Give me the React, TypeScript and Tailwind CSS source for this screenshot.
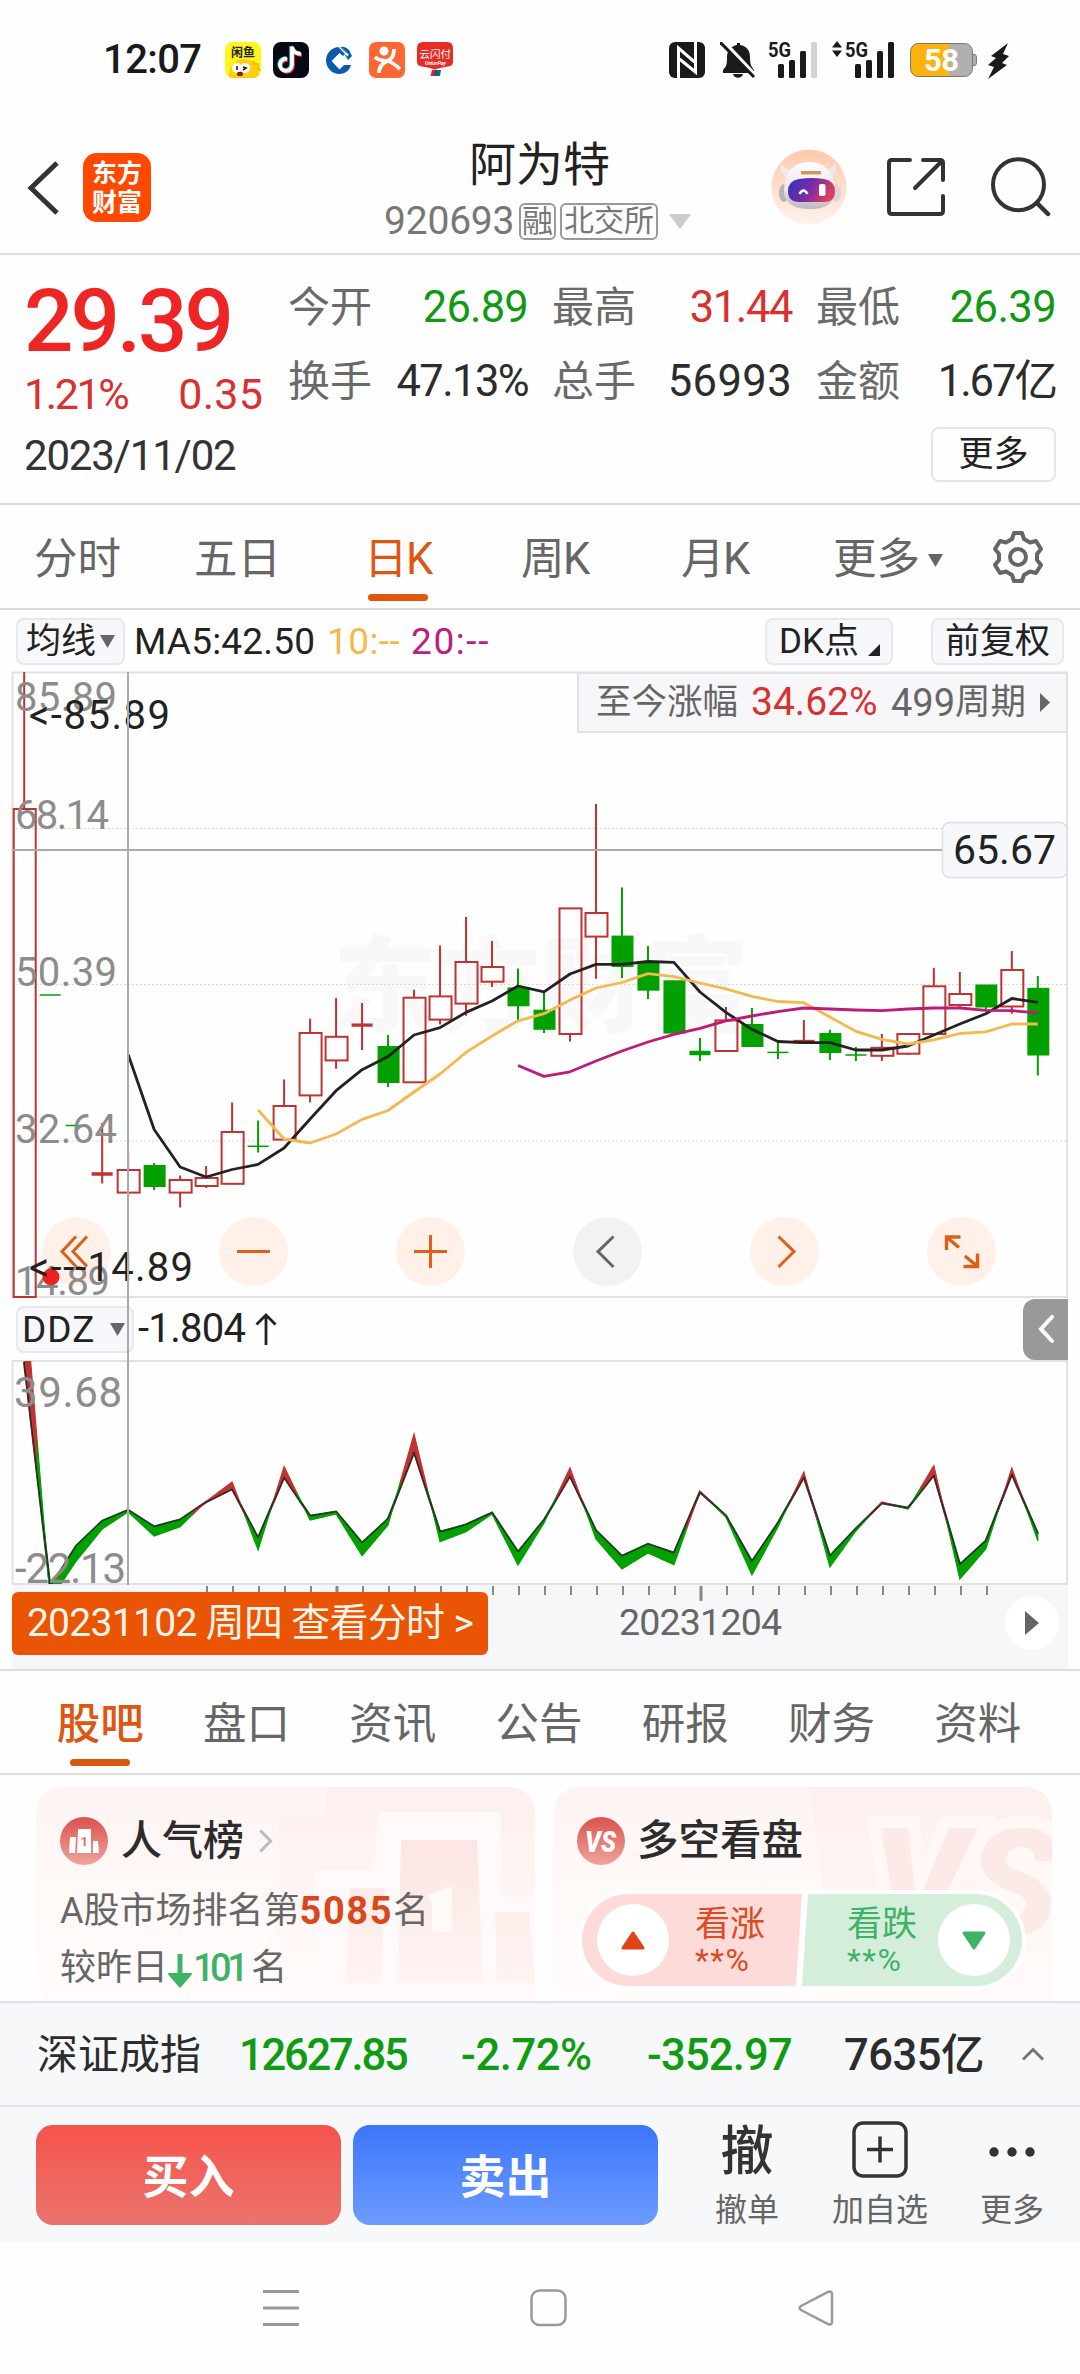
import { ChevronRight } from "lucide-react";
import type { ReactNode } from "react";

type Candle = {
  up: boolean;
  high: number;
  top: number;
  bottom: number;
  low: number;
};

const FIRST_X = 24.2;
const STEP = 25.99;
const xAt = (i: number) => FIRST_X + STEP * i;

// [rising, high, body top, body bottom, low] in chart coordinates
const rawCandles: [number, number, number, number, number][] = [
  [1, 672, 809, 1297, 1297],
  [0, 995, 995, 995, 995],
  [0, 1125.5, 1125.5, 1125.5, 1125.5],
  [1, 1123, 1173, 1175, 1183.5],
  [1, 1152, 1170, 1192.6, 1196],
  [0, 1163, 1166, 1186, 1190],
  [1, 1175.5, 1180, 1192.6, 1207.5],
  [1, 1166, 1178, 1186, 1188],
  [1, 1102.5, 1132, 1183.8, 1184.6],
  [0, 1120.6, 1146.3, 1146.3, 1152.6],
  [1, 1079.4, 1106, 1139.6, 1139.6],
  [1, 1018.7, 1033, 1095.4, 1102.5],
  [1, 998, 1036.8, 1060.4, 1068.8],
  [1, 1003, 1024.2, 1026, 1050],
  [0, 1035, 1047, 1082, 1087],
  [1, 989.7, 997.7, 1082.3, 1082.3],
  [1, 945.5, 996.4, 1019.6, 1024.6],
  [1, 917, 962, 1003.6, 1015.8],
  [1, 941, 967, 981.7, 987],
  [0, 968.6, 988.4, 1005.3, 1021],
  [0, 992.6, 1010.7, 1028.8, 1033],
  [1, 908.4, 908.4, 1034, 1041.5],
  [1, 804, 913, 936.6, 978.7],
  [0, 887.4, 936.6, 966, 978],
  [0, 946, 962, 989.7, 999],
  [0, 981.3, 981.3, 1032.6, 1032.6],
  [0, 1038, 1051.5, 1054.5, 1061],
  [1, 1007, 1020.4, 1051, 1051],
  [0, 1008, 1025, 1046, 1046],
  [0, 1042, 1052.4, 1052.4, 1059],
  [1, 1020, 1040.6, 1042.7, 1042.7],
  [0, 1029.7, 1034, 1052, 1060],
  [0, 1047, 1055, 1055, 1061],
  [1, 1034, 1047.8, 1055.8, 1061],
  [1, 1034, 1034, 1053.7, 1055],
  [1, 967.8, 986.3, 1034, 1034],
  [1, 972, 994, 1005, 1008],
  [0, 985.5, 985.5, 1006.5, 1009.5],
  [1, 951, 970, 1006.5, 1013.7],
  [0, 976, 988.8, 1054.5, 1075.6],
];

const candles: Candle[] = rawCandles.map(([up, high, top, bottom, low]) => ({
  up: up === 1,
  high,
  top,
  bottom,
  low,
}));

const averages = [
  {
    color: "#222222",
    start: 4,
    values: [
      1054.5, 1129.5, 1167, 1177, 1169.5, 1164.4, 1148, 1119, 1090.7, 1069.7,
      1056.6, 1035, 1027.6, 1012.4, 1001, 986, 991.8, 974, 964.4, 964.4, 961.5,
      962.3, 992, 1012.4, 1029.3, 1041.5, 1042.7, 1042.7, 1050, 1050, 1046,
      1035, 1024, 1013.7, 998.5, 1002.3,
    ],
  },
  {
    color: "#F3B94F",
    start: 9,
    values: [
      1110, 1139, 1143, 1134, 1119.4, 1110.5, 1092, 1074, 1052.4, 1036, 1020.8,
      1013.7, 1000, 988, 982.5, 973.7, 976.6, 983, 988.8, 996.4, 1001.5, 1002.7,
      1017, 1031.4, 1039.4, 1044, 1039.8, 1033.5, 1031.8, 1024, 1024,
    ],
  },
  {
    color: "#BF1A7A",
    start: 19,
    values: [
      1065.5, 1076.4, 1071.8, 1061, 1051, 1042, 1034.3, 1028.4, 1020.8, 1016,
      1011.6, 1008, 1009, 1010, 1010.7, 1009, 1008, 1008, 1010.3, 1010.7,
      1012.8,
    ],
  },
];

// [line, band edge] for the DDZ indicator
const ddz: [number, number][] = [
  [1362, 1283], [1587, 1600], [1546, 1561], [1521, 1529], [1510, 1512],
  [1526.7, 1536], [1519.7, 1526.7], [1502, 1501.5], [1489, 1482], [1538, 1550],
  [1477, 1466.7], [1516, 1520], [1511.7, 1514], [1543, 1555.7], [1519, 1525],
  [1452, 1434], [1532, 1541.7], [1524.7, 1531.7], [1512.7, 1514], [1552, 1565],
  [1520, 1523], [1476, 1467.7], [1530.7, 1539], [1556, 1569], [1544, 1553],
  [1553, 1564.7], [1492, 1491.5], [1515.7, 1517], [1561.7, 1575], [1523, 1527],
  [1477, 1472], [1556, 1567], [1528.7, 1531], [1503, 1502], [1508, 1509],
  [1475, 1465.7], [1564.7, 1579], [1541, 1549], [1474, 1468], [1533.7, 1540.7],
];

const RED = "#BF3330";
const GREEN = "#02A000";

function StatusBar() {
  return (
    <div className="flex h-[120px] items-center pl-[103px] pr-[70px] text-[#1a1a1a]">
      <span className="w-[122px] text-[40px] font-medium leading-none tracking-[-0.6px]">
        12:07
      </span>
      <div className="flex gap-3">
        <svg width="36" height="36" viewBox="0 0 36 36">
          <defs>
            <clipPath id="fishClip">
              <rect width="36" height="36" rx="8" />
            </clipPath>
          </defs>
          <g clipPath="url(#fishClip)">
            <rect width="36" height="36" fill="#FDF61A" />
            <circle cx="19" cy="32" r="15" fill="#FFD012" />
            <circle cx="12" cy="26" r="5" fill="#fff" />
            <circle cx="20" cy="26" r="5" fill="#fff" />
            <path d="M12 24v4M18 25l3 1-3 2" stroke="#222" strokeWidth="1.6" fill="none" />
            <ellipse cx="15" cy="32" rx="3" ry="2.2" fill="#8b1a10" />
            <path d="M28 19l2 3 3 0 0 4 2 3" stroke="#F5A800" strokeWidth="1.5" fill="none" />
            <text x="6" y="15" fontSize="12" fontWeight="700" fill="#222">
              闲鱼
            </text>
          </g>
        </svg>
        <svg width="36" height="36" viewBox="0 0 36 36">
          <rect width="36" height="36" rx="8" fill="#080814" />
          <g fill="none" strokeWidth="3.6">
            <path d="M14 17a6 6 0 1 0 5 6V5c1 4 4 7 9 7" stroke="#25F4EE" transform="translate(-.8 -.8)" />
            <path d="M14 17a6 6 0 1 0 5 6V5c1 4 4 7 9 7" stroke="#FE2C55" transform="translate(1 1)" />
            <path d="M14 17a6 6 0 1 0 5 6V5c1 4 4 7 9 7" stroke="#fff" />
          </g>
        </svg>
        <svg width="36" height="36" viewBox="0 0 36 36">
          <path d="M19 6A12.500 12.500 0 1 0 30 24L22 24" stroke="none" fill="none" />
          <path
            d="M20 5C11 4 5 11 5 18.500S11 32 18.500 32c6 0 10-3.500 11.500-9h-7l-4.500 4.500-8-8.500 8-8 3.500 3 3-3z"
            fill="#0A5BAF"
          />
          <path d="M20 5l8 8h-4l3 5 4-4-3-6q-4-4-8-3z" fill="#0A5BAF" />
          <path d="M18 5l9 9" stroke="#fff" strokeWidth="1.200" />
        </svg>
        <svg width="36" height="36" viewBox="0 0 36 36">
          <rect width="36" height="36" rx="7" fill="#FF6633" />
          <circle cx="15" cy="9" r="4.6" fill="#fff" />
          <path
            d="M6 15c5 5 9 3 12 4 4-1 7-5 7-12M18 19C12 22 10 26 10 31M18 19c6 1 8 4 13 8"
            stroke="#fff"
            strokeWidth="3.8"
            fill="none"
          />
        </svg>
        <svg width="36" height="36" viewBox="0 0 36 36">
          <path d="M6 0h24q6 0 6 6v14q0 4-5 4.500-7 1-13 3-6-2-13-3Q0 24 0 20V6Q0 0 6 0z" fill="#E92B25" />
          <text x="2.500" y="15.500" fontSize="10.500" fill="#fff">
            云闪付
          </text>
          <text x="8" y="22.500" fontSize="5" fontStyle="italic" fontWeight="700" fill="#fff">
            UnionPay
          </text>
          <path d="M15 28h4l-1.500 6h-4z" fill="#E0262E" />
          <path d="M18 28h3l-1 6h-3z" fill="#1B4F8F" />
          <path d="M20 28h4l-1 6h-4z" fill="#0B7478" />
        </svg>
      </div>
      <div className="ml-auto flex items-center">
        <svg width="36" height="36" viewBox="0 0 36 36">
          <rect width="36" height="36" rx="6" fill="#1a1a1a" />
          <path d="M9.500 36V6l16 14M26.500 0v30l-16-13" stroke="#fff" strokeWidth="3" fill="none" />
        </svg>
        <svg className="ml-[15px]" width="36" height="36" viewBox="0 0 36 36">
          <path
            d="M17 3V1h3v2c7 1 10 6 10 12 0 7 1 9 4 13v3H3v-3c4-4 4-7 4-13 0-6 4-11 10-12zM13 32h10c-1 5-9 5-10 0z"
            fill="#1a1a1a"
          />
          <path d="M3-1l32 34" stroke="#fff" strokeWidth="4" />
          <path d="M0 0l34 35" stroke="#1a1a1a" strokeWidth="3" />
        </svg>
        <svg className="ml-[12px] overflow-visible" width="49" height="38" viewBox="0 0 49 38">
          <text x="0" y="15.500" fontSize="20" fontWeight="700" fill="#1a1a1a" textLength="23" lengthAdjust="spacingAndGlyphs">
            5G
          </text>
          <rect x="10" y="23" width="6" height="14" rx="1.500" fill="#1a1a1a" />
          <rect x="21" y="19" width="6" height="18" rx="1.500" fill="#1a1a1a" />
          <rect x="32" y="10" width="6" height="27" rx="1.500" fill="#1a1a1a" />
          <rect x="43" y="1" width="6" height="36" rx="1.500" fill="#d2d2d2" />
        </svg>
        <svg className="ml-[15px] overflow-visible" width="62" height="38" viewBox="0 0 62 38">
          <path d="M0 6.500L5 0l5 6.500zM0 9.500h10L5 16z" fill="#1a1a1a" />
          <text x="13" y="15.500" fontSize="20" fontWeight="700" fill="#1a1a1a" textLength="23" lengthAdjust="spacingAndGlyphs">
            5G
          </text>
          <rect x="23" y="23" width="6" height="14" rx="1.500" fill="#1a1a1a" />
          <rect x="34" y="19" width="6" height="18" rx="1.500" fill="#1a1a1a" />
          <rect x="45" y="10" width="6" height="27" rx="1.500" fill="#1a1a1a" />
          <rect x="56" y="1" width="6" height="36" rx="1.500" fill="#1a1a1a" />
        </svg>
        <svg className="ml-[16px]" width="67" height="36" viewBox="0 0 67 36">
          <rect x=".5" y="1.500" width="62" height="33" rx="8" fill="#B0B0B0" />
          <path d="M39 1.500H8.500a8 8 0 0 0-8 8v17a8 8 0 0 0 8 8H39z" fill="#FCB30B" />
          <rect x=".5" y="1.500" width="62" height="33" rx="8" fill="none" stroke="#777" />
          <path d="M62.500 12q4 0 4 3v6q0 3-4 3z" fill="#B0B0B0" stroke="#777" />
          <text x="14" y="29" fontSize="31" fontWeight="700" fill="#fff" textLength="35">
            58
          </text>
        </svg>
        <svg className="ml-[11px]" width="22" height="37" viewBox="0 0 22 37">
          <path d="M20 1L3 14l5 2-8 7 6 2L0 37l19-14-5-2 7-7-6-2z" fill="#1a1a1a" />
        </svg>
      </div>
    </div>
  );
}

function Header() {
  return (
    <header className="flex h-[135px] items-start border-b-2 border-[#dcdcdc] pl-[26px] pt-[22px]">
      <svg className="mt-[18px]" width="36" height="56" viewBox="0 0 36 56">
        <path d="M31 3L5 28l26 25" stroke="#333" strokeWidth="5" fill="none" />
      </svg>
      <div className="ml-[21px] mt-[11px] flex h-[69px] w-[68px] flex-col items-center justify-center rounded-[14px] bg-[#FF4800] text-[25px] font-bold leading-[29px] text-white">
        <span>东方</span>
        <span>财富</span>
      </div>
      <div className="ml-[204px] flex w-[340px] flex-col items-center">
        <h1 className="ml-[29px] text-[47px] leading-[46px] text-[#222]">阿为特</h1>
        <div className="mt-[13px] flex h-[40px] items-center self-start pl-[29px] text-[#777]">
          <span className="w-[135px] text-[39px] leading-none tracking-[-0.2px]">920693</span>
          <span className="flex h-[37px] w-[37px] items-center justify-center rounded-md border-2 border-[#999] text-[31px] leading-none">
            融
          </span>
          <span className="ml-1 flex h-[37px] w-[98px] items-center justify-center rounded-md border-2 border-[#999] text-[30px] leading-none">
            北交所
          </span>
          <svg className="ml-[11px]" width="22" height="15" viewBox="0 0 22 15">
            <path d="M1 0h20q1 0 .5 1L12 14q-1 1-2 0L.5 1Q0 0 1 0z" fill="#ccc" />
          </svg>
        </div>
      </div>
      <svg className="ml-[76px] mt-[7px]" width="76" height="76" viewBox="0 0 76 76">
        <defs>
          <linearGradient id="botBg" x1="0" y1="0" x2="0" y2="1">
            <stop offset="0" stopColor="#FFC9AE" />
            <stop offset="1" stopColor="#FFF3EC" />
          </linearGradient>
          <linearGradient id="visor" x1="0" y1="0" x2="1" y2="0.300">
            <stop offset="0" stopColor="#2B35B5" />
            <stop offset="0.550" stopColor="#7A2AA8" />
            <stop offset="1" stopColor="#D8405F" />
          </linearGradient>
          <linearGradient id="shell" x1="0" y1="0" x2="0" y2="1">
            <stop offset="0" stopColor="#FFFFFF" />
            <stop offset="0.600" stopColor="#E9E5E8" />
            <stop offset="1" stopColor="#BDB8C0" />
          </linearGradient>
        </defs>
        <circle cx="38" cy="38" r="37.500" fill="url(#botBg)" />
        <path d="M11 14q-4 10 5 15l6-8q-8 0-11-7zM64 14q4 10-5 15l-6-8q8 0 11-7z" fill="#EFEAEA" />
        <ellipse cx="13" cy="44" rx="5" ry="9" fill="#B9B2B8" />
        <ellipse cx="65" cy="44" rx="5" ry="9" fill="#DCD6DA" />
        <path d="M38 13c17 0 25 12 26 28 0 14-10 19-25 19s-26-5-26-19c1-16 8-28 25-28z" fill="url(#shell)" />
        <path d="M28 30q12-2 25 0 11 2 11 12 0 11-11 11H28q-11 0-11-11 0-10 11-12z" fill="url(#visor)" />
        <path d="M28.500 45q4-7 8 0" stroke="#fff" strokeWidth="2.500" fill="none" />
        <rect x="48" y="35" width="6.500" height="12" rx="2" fill="#fff" />
        <rect x="30" y="22" width="20" height="3.500" rx="1" fill="#D9935A" />
      </svg>
      <svg className="ml-[39px] mt-[14px]" width="62" height="62" viewBox="0 0 62 62">
        <path
          d="M24 4H6q-3 0-3 3v48q0 3 3 3h48q3 0 3-3V40M37 4h17q3 0 3 3v17M56 5L29 32"
          stroke="#333"
          strokeWidth="4"
          strokeLinecap="round"
          fill="none"
        />
      </svg>
      <svg className="ml-[41px] mt-[13px]" width="62" height="64" viewBox="0 0 62 64">
        <circle cx="29.500" cy="29.700" r="25.500" stroke="#333" strokeWidth="4" fill="none" />
        <path d="M48 48l11 11" stroke="#333" strokeWidth="4.500" strokeLinecap="round" />
      </svg>
    </header>
  );
}

const quotes = [
  [
    { label: "今开", value: "26.89", cls: "tracking-[-0.8px] text-[#119A11]" },
    { label: "最高", value: "31.44", cls: "tracking-[-1.4px] text-[#D93030]" },
    { label: "最低", value: "26.39", cls: "tracking-[-0.6px] text-[#119A11]" },
  ],
  [
    { label: "换手", value: "47.13%", cls: "tracking-[-1.6px] text-[#2c2c2c]" },
    { label: "总手", value: "56993", cls: "tracking-[0.4px] text-[#2c2c2c]" },
    { label: "金额", value: "1.67亿", cls: "tracking-[-2px] text-[#2c2c2c]" },
  ],
];

function QuotePanel() {
  return (
    <section className="flex h-[250px] flex-col border-b-2 border-[#dcdcdc] pl-[24px] pr-[24px]">
      <div className="flex h-[164px]">
        <div className="w-[264px]">
          <div className="mt-[23px] h-[86px] text-[87px] font-medium leading-[86px] tracking-[-3px] text-[#EE2525]">
            29.39
          </div>
          <div className="mt-[5px] flex w-[239px] justify-between text-[43px] leading-[50px] text-[#D93030]">
            <span className="tracking-[-2.4px]">1.21%</span>
            <span className="tracking-[0.2px]">0.35</span>
          </div>
        </div>
        <div className="flex flex-1 flex-col pt-[16px]">
          {quotes.map((row, i) => (
            <div key={i} className="flex h-[75px] items-center gap-[24px]">
              {row.map((q) => (
                <div key={q.label} className="flex w-[240px] items-center justify-between">
                  <span className="text-[42px] leading-none text-[#6a6a6a]">{q.label}</span>
                  <span className={`text-[43.5px] leading-none ${q.cls}`}>{q.value}</span>
                </div>
              ))}
            </div>
          ))}
        </div>
      </div>
      <div className="flex items-center justify-between">
        <span className="mt-[10px] text-[42px] leading-none tracking-[-1.2px] text-[#333]">2023/11/02</span>
        <button className="mt-2 flex h-[55px] w-[125px] items-center justify-center rounded-lg border-2 border-[#e6e6e8] text-[35px] leading-none text-[#222]">
          更多
        </button>
      </div>
    </section>
  );
}

function Down({ className }: { className?: string }) {
  return (
    <svg className={className} width="15" height="13" viewBox="0 0 15 13">
      <path d="M0 0h15L7.500 13z" fill="#666" />
    </svg>
  );
}

function PeriodTabs() {
  return (
    <nav className="flex h-[105px] items-start border-b-2 border-[#dcdcdc] pl-[34px] pt-[30px] text-[43.5px] leading-[50px] text-[#666]">
      <span className="w-[160px]">分时</span>
      <span className="w-[170px]">五日</span>
      <span className="flex w-[157px] flex-col tracking-[-1.5px] text-[#DE5710]">
        日K
        <i className="ml-[4px] mt-[9px] h-[7px] w-[60px] rounded-full bg-[#E2560B]" />
      </span>
      <span className="w-[160px] tracking-[-1.5px]">周K</span>
      <span className="w-[152px] tracking-[-1.5px]">月K</span>
      <span className="flex w-[158px] items-center">
        更多
        <Down className="ml-[8px]" />
      </span>
      <svg className="mt-[-5px]" width="54" height="54" viewBox="0 0 54 54" fill="none" stroke="#666" strokeWidth="4">
        <path
          d="M23 3h8l2 6 6 3.500 6-1.500 5 8-4 5v6l4 5-5 8-6-1.500-6 3.500-2 6h-8l-2-6-6-3.500-6 1.500-5-8 4-5v-6l-4-5 5-8 6 1.500 6-3.500z"
          strokeLinejoin="round"
        />
        <circle cx="27" cy="27" r="8" />
      </svg>
    </nav>
  );
}

function Chip({ className, children }: { className: string; children: ReactNode }) {
  return (
    <span
      className={`flex h-[47px] shrink-0 items-center rounded-lg border-2 border-[#e6e8ec] bg-[#f7f8fb] text-[35px] leading-none text-[#222] ${className}`}
    >
      {children}
    </span>
  );
}

function AverageBar() {
  return (
    <div className="flex h-[62px] items-center pl-[16px] pr-[16px] text-[37px] leading-none">
      <Chip className="w-[109px] pl-[8px]">
        均线
        <Down className="ml-[4px]" />
      </Chip>
      <span className="ml-[9px] w-[193px] tracking-[0.2px] text-[#222]">MA5:42.50</span>
      <span className="w-[84px] tracking-[0.4px] text-[#F0BA4E]">10:--</span>
      <span className="tracking-[1.6px] text-[#BB2080]">20:--</span>
      <Chip className="ml-auto w-[128px] pl-[12px]">
        DK点
        <svg className="ml-[9px] mt-[18px]" width="12" height="12" viewBox="0 0 12 12">
          <path d="M12 0v12H0z" fill="#222" />
        </svg>
      </Chip>
      <Chip className="ml-[38px] w-[133px] justify-center">前复权</Chip>
    </div>
  );
}

function CandleShape({ c, i }: { c: Candle; i: number }) {
  const x = xAt(i);
  const color = c.up ? RED : GREEN;
  const flat = c.bottom - c.top < 4;
  return (
    <g stroke={color} strokeWidth="2">
      <path d={`M${x} ${c.high}V${c.top}M${x} ${c.bottom}V${c.low}`} />
      {flat ? (
        <rect
          x={x - 10.5}
          y={c.top - 0.75}
          width="21"
          height={c.bottom - c.top + 1.5}
          fill={color}
          stroke="none"
        />
      ) : (
        <rect
          x={x - (c.up ? 10.5 : 9.5)}
          y={c.top}
          width={c.up ? 22 : 20}
          height={c.bottom - c.top}
          fill={c.up ? "none" : color}
        />
      )}
    </g>
  );
}

function PriceChart() {
  const orange = "#DB611A";
  return (
    <div className="relative">
      <svg className="block overflow-visible" width="1080" height="626" viewBox="0 672 1080 626">
        <text x="333" y="1024" fontSize="104" fontWeight="900" fill="#F8F8F9" textLength="416">
          东方财富
        </text>
        <g stroke="#dadada" strokeWidth="1.200" strokeDasharray="2 2">
          <path d="M12 828.500H1067M12 984.500H1067M12 1141H1067" />
        </g>
        <rect x="12.500" y="672.500" width="1054.500" height="624.500" fill="none" stroke="#e2e2e2" strokeWidth="2" />
        {candles.map((c, i) => (
          <CandleShape key={i} c={c} i={i} />
        ))}
        {averages.map((line) => (
          <polyline
            key={line.color}
            points={line.values.map((y, i) => `${xAt(line.start + i)},${y}`).join(" ")}
            fill="none"
            stroke={line.color}
            strokeWidth="2.800"
            strokeLinejoin="round"
          />
        ))}
        <path d="M12 850H942" stroke="#aaa" strokeWidth="2" />
        {[76.4, 253.4, 430.4, 607.5, 784.5, 961.5].map((x, i) => (
          <circle key={x} cx={x} cy="1251.600" r="34.500" fill={i === 3 ? "#F2F2F2" : "#FFF1E9"} />
        ))}
        <g fill="none" stroke={orange} strokeWidth="3">
          <path d="M76 1236.500L62 1251.500L76 1266.500M87 1236.500L73 1251.500L87 1266.500" />
          <path d="M237 1251.500h33M414 1251.500h33M430.500 1235v33" />
          <path d="M613.500 1236.500L598 1251.600L613.500 1267" stroke="#666" />
          <path d="M778.500 1236.500L794 1251.600L778.500 1267" />
          <path d="M946.500 1250v-13h14M947 1237.500l12 10M963.500 1266.500h14v-13M977 1266l-12-10" strokeWidth="3.400" />
        </g>
        <g fontSize="40" fill="#8c8c8c">
          <text x="15" y="710.500" textLength="102">85.89</text>
          <text x="15" y="829" textLength="94">68.14</text>
          <text x="15" y="985.500" textLength="102">50.39</text>
          <text x="15" y="1142.500" textLength="102">32.64</text>
          <text x="15" y="1295" textLength="95">14.89</text>
        </g>
        <circle cx="51" cy="1277" r="8.500" fill="#EE2222" />
        <g fontSize="40" fill="#222">
          <text x="29" y="728.500" textLength="141">{"<-85.89"}</text>
          <text x="29" y="1281" textLength="164">{"<---14.89"}</text>
        </g>
        <rect x="942.500" y="822.500" width="124.500" height="55" rx="7" fill="#F7F8FB" stroke="#DCDFE6" strokeWidth="1.500" />
        <text x="953" y="864" fontSize="41" fill="#222" textLength="103">
          65.67
        </text>
      </svg>
      <div className="absolute right-[12px] top-0 flex h-[61px] w-[491px] items-center border-2 border-[#e2e2e6] bg-[#f7f7fa] pl-[17px] text-[35.5px] leading-none text-[#666]">
        至今涨幅
        <span className="ml-[13px] w-[140px] text-[39px] text-[#D93030]">34.62%</span>
        <span className="text-[38px]">499</span>周期
        <svg className="ml-[14px]" width="10" height="19" viewBox="0 0 10 19">
          <path d="M0 0l10 9.500L0 19z" fill="#666" />
        </svg>
      </div>
    </div>
  );
}

function DdzBar() {
  return (
    <div className="flex h-[62px] items-center pl-[16px] pr-[12px] leading-none">
      <Chip className="w-[118px] justify-between pl-[4px] pr-[7px]">
        <span className="text-[37px] tracking-[1px]">DDZ</span>
        <Down />
      </Chip>
      <span className="ml-[4px] text-[40px] tracking-[-0.7px] text-[#222]">-1.804</span>
      <svg className="ml-[10px]" width="22" height="32" viewBox="0 0 22 32">
        <path d="M11 32V2M1.500 11.500L11 2l9.500 9.500" stroke="#222" strokeWidth="2.800" fill="none" />
      </svg>
      <div className="ml-auto flex h-[61px] w-[45px] items-center justify-center rounded-l-[12px] bg-[#999]">
        <svg width="16" height="28" viewBox="0 0 16 28">
          <path d="M14 2L3 14l11 12" stroke="#fff" strokeWidth="4" strokeLinecap="round" fill="none" />
        </svg>
      </div>
    </div>
  );
}

function DdzChart() {
  const last = ddz.length - 1;
  const bands = ddz.map(([a, b], i) => {
    const top: string[] = [];
    const bottom: string[] = [];
    if (i > 0) {
      const x = (xAt(i - 1) + xAt(i)) / 2;
      top.push(`${x},${(ddz[i - 1][0] + a) / 2}`);
      bottom.unshift(`${x},${(ddz[i - 1][1] + b) / 2}`);
    }
    top.push(`${xAt(i)},${a}`);
    bottom.unshift(`${xAt(i)},${b}`);
    if (i < last) {
      const x = (xAt(i + 1) + xAt(i)) / 2;
      top.push(`${x},${(ddz[i + 1][0] + a) / 2}`);
      bottom.unshift(`${x},${(ddz[i + 1][1] + b) / 2}`);
    }
    return { points: [...top, ...bottom].join(" "), color: b < a ? RED : GREEN };
  });

  return (
    <svg className="block" width="1080" height="225" viewBox="0 1360 1080 225">
      <defs>
        <clipPath id="ddzClip">
          <rect x="12" y="1361" width="1056" height="223" />
        </clipPath>
      </defs>
      <rect x="12.500" y="1361" width="1054.500" height="223" fill="none" stroke="#e2e2e2" strokeWidth="2" />
      <g clipPath="url(#ddzClip)">
        <polyline
          points={ddz.map(([y], i) => `${xAt(i)},${y}`).join(" ")}
          fill="none"
          stroke="#222"
          strokeWidth="2.400"
        />
        {bands.map((band, i) => (
          <polygon key={i} points={band.points} fill={band.color} stroke={band.color} strokeWidth="1.200" />
        ))}
        <polyline
          points={ddz.map(([y], i) => `${xAt(i)},${y}`).join(" ")}
          fill="none"
          stroke="#222"
          strokeWidth="1"
        />
      </g>
      <g fontSize="42" fill="#8c8c8c">
        <text x="14" y="1406.500" textLength="108">39.68</text>
        <text x="15" y="1582.500" textLength="111">-22.13</text>
      </g>
    </svg>
  );
}

function TimeAxis() {
  const ticks = Array.from({ length: 31 }, (_, i) => 207 + i * 26);
  return (
    <div className="relative mx-[12px] flex h-[84px] items-center bg-[#f7f7fa] pr-[9px]">
      <svg className="absolute left-0 top-0" width="1056" height="18" viewBox="12 1585 1056 18">
        {ticks.map((x, i) => (
          <path
            key={x}
            d={`M${x} 1586v${i === 19 ? 15 : 9}`}
            stroke="#888"
            strokeWidth={i === 19 || i === 5 ? 3 : 2}
          />
        ))}
      </svg>
      <button className="relative mt-[-7px] flex h-[63px] w-[476px] items-center justify-center whitespace-pre rounded-[6px] bg-[#E95504] text-[39px] leading-none tracking-[-0.7px] text-[#FFF4EA]">
        20231102 周四 查看分时 &gt;
      </button>
      <span className="ml-[131px] mt-[-9px] text-[37.5px] leading-none tracking-[-0.8px] text-[#666]">
        20231204
      </span>
      <span className="ml-auto mt-[-9px] flex h-[54px] w-[54px] items-center justify-center rounded-full bg-white">
        <svg width="14" height="24" viewBox="0 0 14 24">
          <path d="M0 0l14 12L0 24z" fill="#666" />
        </svg>
      </span>
    </div>
  );
}

const sections = ["股吧", "盘口", "资讯", "公告", "研报", "财务", "资料"];

function SectionTabs() {
  return (
    <nav className="flex h-[106px] border-y-2 border-[#dcdcdc] pl-[27px] pr-[29px] text-[43.5px] leading-[52px] text-[#666]">
      {sections.map((name, i) => (
        <span
          key={name}
          className={`flex flex-1 flex-col items-center pt-[28px] ${i === 0 ? "font-medium text-[#DE5710]" : ""}`}
        >
          {name}
          {i === 0 && <i className="mt-[8px] h-[7px] w-[60px] rounded-full bg-[#D9580F]" />}
        </span>
      ))}
    </nav>
  );
}

function RankCard() {
  return (
    <div className="relative h-[240px] w-[499px] shrink-0 overflow-hidden rounded-[26px] bg-gradient-to-b from-[#FEF5F3] to-[#FFFDFC] pl-[24px] pt-[30px] text-[#666]">
      <svg className="absolute inset-0" width="499" height="216" viewBox="0 0 499 216">
        <defs>
          <linearGradient id="plate" x1="0" y1="0" x2="0" y2="1">
            <stop offset="0" stopColor="#FDF0EE" />
            <stop offset="1" stopColor="#FFFBFA" />
          </linearGradient>
          <linearGradient id="bars" gradientUnits="userSpaceOnUse" x1="0" y1="50" x2="0" y2="200">
            <stop offset="0" stopColor="#FBE6E4" />
            <stop offset="1" stopColor="#FEF4F2" />
          </linearGradient>
        </defs>
        <path d="M243 216V30h46L291 0h208v216z" fill="url(#plate)" />
        <path d="M278 216V83h60l4-58h123v85h36v106z" fill="#FFFAF9" />
        <path d="M314 101h35l-4 95h-35zM365 53h76l6 143h-85zM459 125h34l6 71h-38z" fill="url(#bars)" />
        <path d="M392 108l24-9v46h-20v-27z" fill="#FFF9F8" />
      </svg>
      <div className="relative flex items-center">
        <svg width="48" height="48" viewBox="0 0 48 48">
          <defs>
            <linearGradient id="badgeRed" x1="0" y1="0" x2="0" y2="1">
              <stop offset="0" stopColor="#DB524C" />
              <stop offset="1" stopColor="#F0A39F" />
            </linearGradient>
          </defs>
          <circle cx="24" cy="24" r="24" fill="url(#badgeRed)" />
          <path d="M10 20h6l-1 16H9zM18 12h13v24H17zM33 24h5l1 12h-6z" fill="#fff" />
          <text x="20.500" y="29" fontSize="13" fontWeight="700" fill="#DF6A64">
            1
          </text>
        </svg>
        <b className="ml-[13px] text-[41px] font-medium leading-none text-[#2c2c2c]">人气榜</b>
        <ChevronRight className="ml-[3px] h-[42px] w-[38px] text-[#bbb]" strokeWidth={2} />
      </div>
      <p className="relative mt-[24px] flex items-center text-[36px] leading-[44px]">
        <span>A股市场排名第</span>
        <b className="text-[38px] tracking-[1.600px] text-[#D9481C]">5085</b>名
      </p>
      <p className="relative mt-[13px] flex items-center text-[36px] leading-[44px]">
        较昨日
        <svg className="mt-[6px]" width="24" height="34" viewBox="0 0 24 34">
          <path d="M9.500 0h5v19H23q2 0 0 2.500L13.500 32.500q-1.500 2-3 0L1 21.500Q-1 19 1 19h8.500z" fill="#3FB267" />
        </svg>
        <span className="ml-[1px] mr-[4px] text-[38px] font-medium tracking-[-4.500px] text-[#3FB267]">101</span>
        <span className="ml-[3px]">名</span>
      </p>
    </div>
  );
}

function VoteCard() {
  return (
    <div className="relative h-[240px] w-[499px] shrink-0 overflow-hidden rounded-[26px] bg-gradient-to-b from-[#FEF5F3] to-[#FFFDFC] pl-[24px] pt-[30px]">
      <svg className="absolute inset-0" width="499" height="216" viewBox="0 0 499 216">
        <path d="M256 0h243v216H286z" fill="url(#plate)" />
        <text x="318" y="148" fontSize="150" fontWeight="900" fontStyle="italic" fill="#FCEAE8" stroke="#FFF8F6" strokeWidth="24" paintOrder="stroke">
          VS
        </text>
      </svg>
      <div className="relative flex items-center">
        <svg width="48" height="48" viewBox="0 0 48 48">
          <circle cx="24" cy="24" r="24" fill="url(#badgeRed)" />
          <text x="8" y="35" fontSize="29" fontWeight="900" fontStyle="italic" fill="#fff" textLength="31" lengthAdjust="spacingAndGlyphs">
            VS
          </text>
        </svg>
        <b className="ml-[12px] text-[41.5px] font-medium leading-none text-[#2c2c2c]">多空看盘</b>
      </div>
      <div className="relative mt-[25px] flex h-[100px] w-[450px] items-center justify-between rounded-full pl-[20px] pr-[17px]">
        <svg className="absolute inset-0" width="450" height="100" viewBox="0 0 450 100">
          <rect x="1" width="448" height="100" rx="50" fill="#fff" opacity="0.8" />
          <path d="M51 4h174l-6 92H51a46 46 0 0 1 0-92z" fill="#FDDBD8" />
          <path d="M231 4h168a46 46 0 0 1 0 92H225z" fill="#D5EEDC" />
        </svg>
        <span className="relative flex h-[72px] w-[72px] items-center justify-center rounded-full bg-white">
          <svg width="24" height="19" viewBox="0 0 24 19">
            <path d="M12 2L22 17H2z" fill="#E04416" stroke="#E04416" strokeWidth="3" strokeLinejoin="round" />
          </svg>
        </span>
        <div className="relative ml-[5px] flex flex-col text-[35px] leading-[35px] text-[#DC4A22]">
          看涨
          <span className="mt-[4px] text-[32px] leading-[28px] tracking-[1.500px]">**%</span>
        </div>
        <div className="relative ml-[61px] flex flex-col text-[35px] leading-[35px] text-[#3FB267]">
          看跌
          <span className="mt-[4px] text-[32px] leading-[28px] tracking-[1.500px]">**%</span>
        </div>
        <span className="relative flex h-[72px] w-[72px] items-center justify-center rounded-full bg-white">
          <svg width="24" height="19" viewBox="0 0 24 19">
            <path d="M12 17L22 2H2z" fill="#3FB267" stroke="#3FB267" strokeWidth="3" strokeLinejoin="round" />
          </svg>
        </span>
      </div>
    </div>
  );
}

function IndexBar() {
  return (
    <div className="flex h-[106px] items-center border-y-2 border-[#dfe2e6] bg-[#f7f8fa] pl-[37px] pt-[3px] text-[43.5px] font-medium leading-none text-[#109C10]">
      <span className="w-[202px] text-[41px] font-normal text-[#2c2c2c]">深证成指</span>
      <span className="w-[222px] tracking-[-2.200px]">12627.85</span>
      <span className="w-[186px] tracking-[-0.400px]">-2.72%</span>
      <span className="w-[197px] tracking-[-0.800px]">-352.97</span>
      <span className="w-[177px] tracking-[-0.500px] text-[#2c2c2c]">7635亿</span>
      <svg className="mt-[-4px]" width="24" height="14" viewBox="0 0 24 14">
        <path d="M2 12.500L12 2.500l10 10" stroke="#777" strokeWidth="3" fill="none" />
      </svg>
    </div>
  );
}

function ActionBar() {
  return (
    <div className="flex h-[135px] bg-[#f7f8fa] pl-[36px] pt-[18px] text-[#666]">
      <button className="h-[100px] w-[305px] rounded-[17px] bg-gradient-to-b from-[#F5534B] to-[#EA736C] pt-[4px] text-[46px] font-bold text-white">
        买入
      </button>
      <button className="ml-[12px] h-[100px] w-[305px] rounded-[17px] bg-gradient-to-b from-[#3B76FA] to-[#6D9BFF] pt-[4px] text-[46px] font-bold text-white">
        卖出
      </button>
      <div className="ml-[41px] flex w-[96px] flex-col items-center text-[32px] leading-[42px]">
        <span className="h-[64px] text-[53px] font-medium leading-[55px] text-[#333]">撤</span>
        撤单
      </div>
      <div className="ml-[27px] flex w-[116px] flex-col items-center text-[32px] leading-[42px]">
        <span className="flex h-[64px] items-start">
          <svg className="mt-[-4px]" width="56" height="57" viewBox="0 0 56 57">
            <rect x="2" y="2" width="52" height="53" rx="9" stroke="#333" strokeWidth="3.500" fill="none" />
            <path d="M15 28.500h26M28 15.500v26" stroke="#333" strokeWidth="3.500" />
          </svg>
        </span>
        加自选
      </div>
      <div className="ml-[30px] flex w-[88px] flex-col items-center text-[32px] leading-[42px]">
        <span className="flex h-[64px] items-start pt-[21px]">
          <svg width="46" height="12" viewBox="0 0 46 12">
            <circle cx="5" cy="6" r="4.700" fill="#333" />
            <circle cx="23" cy="6" r="4.700" fill="#333" />
            <circle cx="41" cy="6" r="4.700" fill="#333" />
          </svg>
        </span>
        更多
      </div>
    </div>
  );
}

function SystemNav() {
  return (
    <div className="flex h-[132px] items-center justify-between pl-[263px] pr-[245px]">
      <svg width="36" height="38" viewBox="0 0 36 38" stroke="#999" strokeWidth="3">
        <path d="M0 2.500h36M0 19h36M0 35.500h36" />
      </svg>
      <svg width="37" height="38" viewBox="0 0 37 38">
        <rect x="1.500" y="1.500" width="34" height="34.500" rx="8" stroke="#999" strokeWidth="2.500" fill="none" />
      </svg>
      <svg width="38" height="38" viewBox="0 0 38 38">
        <path
          d="M4 17L31 3q4-1.500 4 2v28q0 3.500-4 2L4 21q-3-2 0-4z"
          stroke="#999"
          strokeWidth="2.500"
          fill="none"
        />
      </svg>
    </div>
  );
}

export default function App() {
  return (
    <main className="w-[1080px] overflow-hidden bg-[#fefefe] font-[Roboto,'Noto_Sans_CJK_SC',sans-serif]">
      <StatusBar />
      <Header />
      <QuotePanel />
      <PeriodTabs />
      <AverageBar />
      <div className="relative">
        <PriceChart />
        <DdzBar />
        <DdzChart />
        {/* crosshair */}
        <i className="absolute left-[127px] top-0 h-[921px] w-[2px] bg-[#aaa]" />
        <TimeAxis />
      </div>
      <SectionTabs />
      <div className="flex h-[226px] gap-[18px] overflow-hidden pl-[36px] pt-[12px]">
        <RankCard />
        <VoteCard />
      </div>
      <IndexBar />
      <ActionBar />
      <SystemNav />
    </main>
  );
}
